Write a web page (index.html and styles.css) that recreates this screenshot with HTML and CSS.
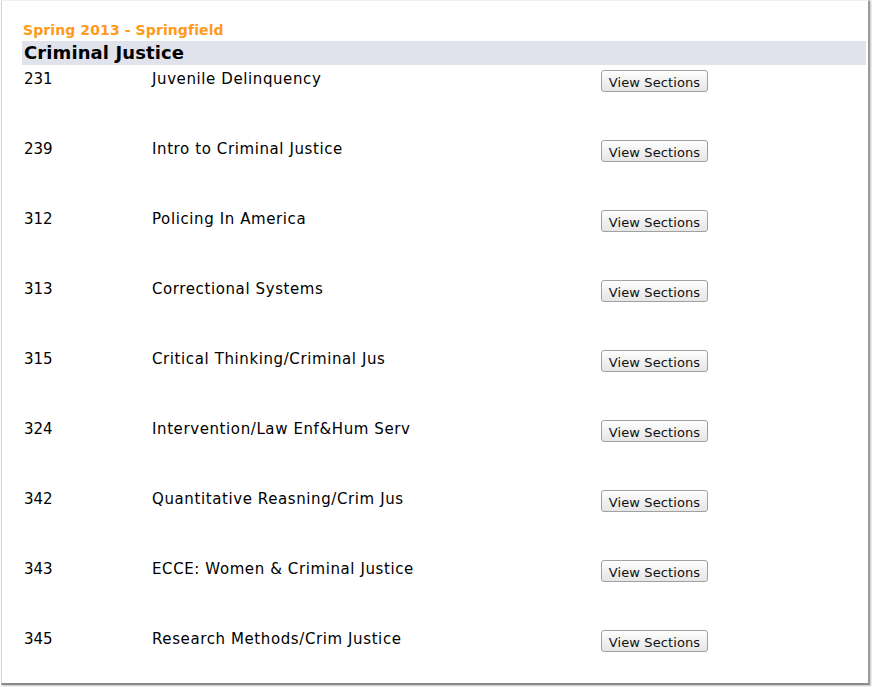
FILE: index.html
```html
<!DOCTYPE html>
<html>
<head>
<meta charset="utf-8">
<link rel="stylesheet" href="styles.css">
</head>
<body>
<div class="frame">
  <div class="term">Spring 2013 - Springfield</div>
  <div class="subject">Criminal Justice</div>
  <div class="rows">
    <div class="row"><span class="num">231</span><span class="title">Juvenile Delinquency</span><span class="act"><button class="btn">View Sections</button></span></div>
    <div class="row"><span class="num">239</span><span class="title">Intro to Criminal Justice</span><span class="act"><button class="btn">View Sections</button></span></div>
    <div class="row"><span class="num">312</span><span class="title">Policing In America</span><span class="act"><button class="btn">View Sections</button></span></div>
    <div class="row"><span class="num">313</span><span class="title">Correctional Systems</span><span class="act"><button class="btn">View Sections</button></span></div>
    <div class="row"><span class="num">315</span><span class="title">Critical Thinking/Criminal Jus</span><span class="act"><button class="btn">View Sections</button></span></div>
    <div class="row"><span class="num">324</span><span class="title">Intervention/Law Enf&amp;Hum Serv</span><span class="act"><button class="btn">View Sections</button></span></div>
    <div class="row"><span class="num">342</span><span class="title">Quantitative Reasning/Crim Jus</span><span class="act"><button class="btn">View Sections</button></span></div>
    <div class="row"><span class="num">343</span><span class="title">ECCE: Women &amp; Criminal Justice</span><span class="act"><button class="btn">View Sections</button></span></div>
    <div class="row"><span class="num">345</span><span class="title">Research Methods/Crim Justice</span><span class="act"><button class="btn">View Sections</button></span></div>
  </div>
</div>
</body>
</html>
```

FILE: styles.css
```css
html, body {
  margin: 0;
  padding: 0;
  background: #ffffff;
}
body {
  width: 872px;
  height: 687px;
  overflow: hidden;
  font-family: "DejaVu Sans", Verdana, sans-serif;
  color: #000;
}
.frame {
  box-sizing: border-box;
  width: 869px;
  height: 685px;
  margin-left: 1px;
  border-left: 1px solid #d4d4d4;
  border-right: 2px solid #9a9a9a;
  border-bottom: 2px solid #8a8a8a;
  border-top: 1px solid #f0f0f0;
  padding: 19px 2px 0 20px;
  box-shadow: 1px 1px 2px rgba(0,0,0,0.25);
}
.term {
  color: #ff9a1a;
  font-weight: bold;
  font-size: 14px;
  letter-spacing: 0.1px;
  line-height: 20px;
  height: 21px;
  padding-left: 1px;
}
.subject {
  background: #e1e3ec;
  font-weight: bold;
  font-size: 18px;
  letter-spacing: 0.1px;
  line-height: 24px;
  height: 24px;
  padding-left: 2px;
}
.row {
  display: grid;
  grid-template-columns: 130px 449px 1fr;
  height: 70px;
  align-items: start;
  font-size: 15px;
  line-height: 20px;
  padding-top: 4px;
  box-sizing: border-box;
}
.num {
  padding-left: 2px;
}
.title {
  letter-spacing: 0.6px;
}
.act {
  padding-top: 1px;
}
.btn {
  font-family: "DejaVu Sans", sans-serif;
  font-size: 13px;
  letter-spacing: 0.1px;
  height: 22px;
  width: 107px;
  padding: 2px 0 0 0;
  border: 1px solid #a0a0a0;
  border-radius: 3px;
  background: linear-gradient(#ffffff, #f1f1f1 50%, #e6e6e6);
  color: #111;
}
```
